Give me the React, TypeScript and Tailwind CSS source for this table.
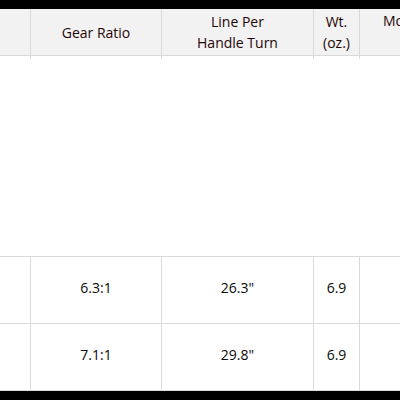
import React from 'react';

const rows = [
  { ratio: '6.3:1', line: '26.3"', wt: '6.9' },
  { ratio: '7.1:1', line: '29.8"', wt: '6.9' },
];

const Cells = ({ children }: { children?: React.ReactNode[] }) => {
  const c = children || [];
  return (
    <>
      <div className="w-[31px] shrink-0 border-r border-[#d9d9d9] flex items-center justify-center">{c[0]}</div>
      <div className="w-[131px] shrink-0 border-r border-[#d9d9d9] flex items-center justify-center">{c[1]}</div>
      <div className="w-[152px] shrink-0 border-r border-[#d9d9d9] flex items-center justify-center text-center">{c[2]}</div>
      <div className="w-[46px] shrink-0 border-r border-[#d9d9d9] flex items-center justify-center text-center">{c[3]}</div>
      <div className="flex-1 min-w-0 flex items-center pl-[23px] whitespace-nowrap overflow-hidden self-stretch">{c[4]}</div>
    </>
  );
};

export default function App() {
  return (
    <div className="w-[400px] h-[400px] overflow-hidden bg-white text-[14px] leading-[21px] text-[#0a0a0a] [font-family:'Open_Sans',sans-serif]">
      <div className="h-[9px] bg-black" />

      {/* header */}
      <div className="flex h-[47px] bg-[#f2f2f2] border-b border-[#d9d9d9] text-[#1f0606]">
        <Cells>
          {[
            null,
            <span key="g">Gear Ratio</span>,
            <span key="l">Line Per<br />Handle Turn</span>,
            <span key="w">Wt.<br />(oz.)</span>,
            <span key="m" className="self-start pt-[1px]">Model</span>,
          ]}
        </Cells>
      </div>

      {/* thin strip of the tall row's borders */}
      <div className="flex h-[3px]">
        <Cells>{[null, null, null, null, null]}</Cells>
      </div>

      <div className="h-[197px]" />

      {rows.map((r) => (
        <div key={r.ratio} className="flex h-[67px] border-t border-[#d9d9d9]">
          <Cells>
            {[
              null,
              <span key="r" className="mb-[6px]">{r.ratio}</span>,
              <span key="l" className="mb-[6px]">{r.line}</span>,
              <span key="w" className="mb-[6px]">{r.wt}</span>,
              null,
            ]}
          </Cells>
        </div>
      ))}
      <div className="border-t border-[#d9d9d9] h-[1px]" />
      <div className="h-[9px] bg-black" />
    </div>
  );
}
